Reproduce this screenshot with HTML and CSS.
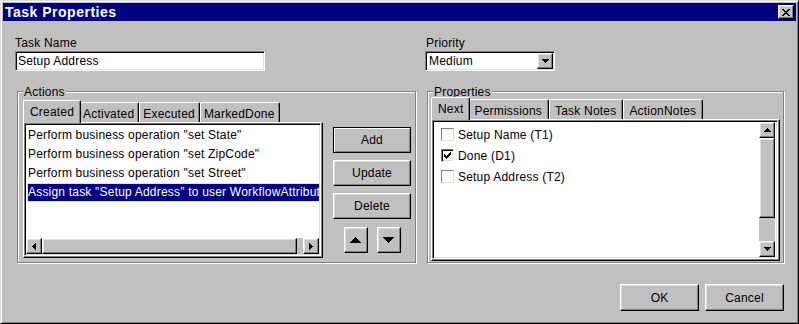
FILE: index.html
```html
<!DOCTYPE html>
<html>
<head>
    <title>Task Properties</title>
    <link rel="stylesheet" href="styles.css">
</head>
<body>
    <div class="window">
        <div class="titlebar">
            <span class="title">Task Properties</span>
            <button class="btn close-btn">
                <svg width="8" height="7" viewBox="0 0 8 7" shape-rendering="crispEdges"><path d="M0 0h2v1H0z M6 0h2v1H6z M1 1h2v1H1z M5 1h2v1H5z M2 2h4v1H2z M3 3h2v1H3z M2 4h4v1H2z M1 5h2v1H1z M5 5h2v1H5z M0 6h2v1H0z M6 6h2v1H6z"/></svg>
            </button>
        </div>

        <div class="dialog">
            <div class="fields">
                <div class="field name-field">
                    <label for="task-name">Task Name</label>
                    <input type="text" id="task-name" class="textbox" value="Setup Address">
                </div>
                <div class="field priority-field">
                    <label>Priority</label>
                    <div class="combo">
                        <span class="combo-value">Medium</span>
                        <span class="btn combo-btn">
                            <svg width="7" height="4" viewBox="0 0 7 4" shape-rendering="crispEdges"><path d="M0 0h7v1H0z M1 1h5v1H1z M2 2h3v1H2z M3 3h1v1H3z"/></svg>
                        </span>
                    </div>
                </div>
            </div>

            <div class="groups">
                <div class="group actions-group">
                    <span class="group-label">Actions</span>
                    <div class="tab-area">
                        <div class="tabs">
                            <div class="tab active">Created</div>
                            <div class="tab">Activated</div>
                            <div class="tab">Executed</div>
                            <div class="tab">MarkedDone</div>
                        </div>
                        <div class="tab-panel actions-panel">
                            <div class="listbox">
                                <div class="list-rows">
                                    <div class="rows-inner">
                                        <div class="row">Perform business operation "set State"</div>
                                        <div class="row">Perform business operation "set ZipCode"</div>
                                        <div class="row">Perform business operation "set Street"</div>
                                        <div class="row selected">Assign task "Setup Address" to user WorkflowAttribute(Assignee)</div>
                                    </div>
                                </div>
                                <div class="hscroll">
                                    <span class="btn sb-btn">
                                        <svg width="4" height="7" viewBox="0 0 4 7" shape-rendering="crispEdges"><path d="M3 0h1v7H3z M2 1h1v5H2z M1 2h1v3H1z M0 3h1v1H0z"/></svg>
                                    </span>
                                    <span class="btn sb-thumb hthumb"></span>
                                    <span class="sb-track"></span>
                                    <span class="btn sb-btn">
                                        <svg width="4" height="7" viewBox="0 0 4 7" shape-rendering="crispEdges"><path d="M0 0h1v7H0z M1 1h1v5H1z M2 2h1v3H2z M3 3h1v1H3z"/></svg>
                                    </span>
                                </div>
                            </div>
                        </div>
                    </div>
                    <div class="side-buttons">
                        <button class="btn side-btn default">Add</button>
                        <button class="btn side-btn">Update</button>
                        <button class="btn side-btn">Delete</button>
                        <div class="arrow-row">
                            <button class="btn arrow-btn">
                                <svg width="11" height="6" viewBox="0 0 11 6" shape-rendering="crispEdges"><path d="M5 0h1v1H5z M4 1h3v1H4z M3 2h5v1H3z M2 3h7v1H2z M1 4h9v1H1z M0 5h11v1H0z"/></svg>
                            </button>
                            <button class="btn arrow-btn">
                                <svg width="11" height="6" viewBox="0 0 11 6" shape-rendering="crispEdges"><path d="M0 0h11v1H0z M1 1h9v1H1z M2 2h7v1H2z M3 3h5v1H3z M4 4h3v1H4z M5 5h1v1H5z"/></svg>
                            </button>
                        </div>
                    </div>
                </div>

                <div class="group props-group">
                    <span class="group-label">Properties</span>
                    <div class="tabs">
                        <div class="tab active">Next</div>
                        <div class="tab">Permissions</div>
                        <div class="tab">Task Notes</div>
                        <div class="tab">ActionNotes</div>
                    </div>
                    <div class="tab-panel props-panel">
                        <div class="listbox props-list">
                            <div class="check-list">
                                <div class="check-row"><span class="checkbox"></span>Setup Name (T1)</div>
                                <div class="check-row">
                                    <span class="checkbox checked">
                                        <svg width="7" height="7" viewBox="0 0 7 7" shape-rendering="crispEdges"><path d="M6 0h1v1H6z M5 1h2v1H5z M0 2h1v1H0z M4 2h3v1H4z M0 3h2v1H0z M3 3h3v1H3z M0 4h5v1H0z M1 5h3v1H1z M2 6h1v1H2z"/></svg>
                                    </span>Done (D1)
                                </div>
                                <div class="check-row"><span class="checkbox"></span>Setup Address (T2)</div>
                            </div>
                            <div class="vscroll">
                                <span class="btn sb-btn">
                                    <svg width="7" height="4" viewBox="0 0 7 4" shape-rendering="crispEdges"><path d="M3 0h1v1H3z M2 1h3v1H2z M1 2h5v1H1z M0 3h7v1H0z"/></svg>
                                </span>
                                <span class="btn sb-thumb vthumb"></span>
                                <span class="sb-track"></span>
                                <span class="btn sb-btn">
                                    <svg width="7" height="4" viewBox="0 0 7 4" shape-rendering="crispEdges"><path d="M0 0h7v1H0z M1 1h5v1H1z M2 2h3v1H2z M3 3h1v1H3z"/></svg>
                                </span>
                            </div>
                        </div>
                    </div>
                </div>
            </div>

            <div class="footer">
                <button class="btn footer-btn">OK</button>
                <button class="btn footer-btn">Cancel</button>
            </div>
        </div>
    </div>
</body>
</html>
```

FILE: styles.css
```css
body {
    margin: 0;
    font-family: "Liberation Sans", Arial, sans-serif;
    font-size: 12px;
    letter-spacing: 0.2px;
    color: #000;
    background: #c0c0c0;
}

.window {
    width: 799px;
    height: 324px;
    box-sizing: border-box;
    padding: 2px;
    background: #c0c0c0;
    border: 1px solid;
    border-color: #dfdfdf #000 #000 #dfdfdf;
    box-shadow: inset 1px 1px #fff, inset -1px -1px #808080;
}

/* raised 3d look used by every button */
.btn {
    box-sizing: border-box;
    display: flex;
    align-items: center;
    justify-content: center;
    padding: 0;
    margin: 0;
    font-family: inherit;
    font-size: 12px;
    letter-spacing: inherit;
    color: #000;
    background: #c0c0c0;
    border: 1px solid;
    border-color: #fff #000 #000 #fff;
    box-shadow: inset -1px -1px #808080, inset 1px 1px #dfdfdf;
}

.titlebar {
    height: 18px;
    display: flex;
    align-items: center;
    justify-content: space-between;
    padding: 0 2px;
    background: #000080;
}

.title {
    color: #fff;
    font-weight: bold;
    font-size: 14px;
    letter-spacing: 0.5px;
    line-height: 18px;
}

.close-btn {
    width: 16px;
    height: 14px;
}

.dialog {
    padding: 15px 12px 0 12px;
}

.fields {
    display: flex;
}

.field label {
    display: block;
    line-height: 14px;
    margin-bottom: 1px;
}

.name-field {
    width: 250px;
}

.priority-field {
    width: 130px;
    margin-left: 160px;
}

.priority-field label {
    padding-left: 1px;
}

.textbox,
.combo {
    box-sizing: border-box;
    height: 20px;
    background: #fff;
    border: 1px solid;
    border-color: #808080 #fff #fff #808080;
    box-shadow: inset 1px 1px #000, inset -1px -1px #dfdfdf;
}

.textbox {
    width: 250px;
    padding: 0 2px;
    font-family: inherit;
    font-size: 12px;
    letter-spacing: inherit;
    color: #000;
    outline: none;
}

.combo {
    display: flex;
    padding: 1px;
}

.combo-value {
    flex: 1;
    line-height: 16px;
    padding-left: 2px;
}

.combo-btn {
    width: 16px;
    height: 16px;
}

.groups {
    display: flex;
    gap: 11px;
    margin: 20px 0 0 2px;
}

.group {
    position: relative;
    box-sizing: border-box;
    border: 1px solid #808080;
    box-shadow: inset 1px 1px #fff, 1px 1px #fff;
}

.group-label {
    position: absolute;
    top: -7px;
    left: 5px;
    padding: 0 1px;
    line-height: 14px;
    background: #c0c0c0;
}

.actions-group {
    width: 399px;
    display: flex;
    gap: 10px;
    padding: 8px 4px 4px 5px;
}

.props-group {
    flex: 1;
    padding: 5px 3px 1px 3px;
}

.tab-area {
    width: 300px;
}

.tabs {
    position: relative;
    z-index: 1;
    display: flex;
    align-items: flex-end;
    padding-left: 2px;
}

.tab {
    padding: 4px 4px 1px 3px;
    line-height: 14px;
    white-space: nowrap;
    background: #c0c0c0;
    border-top: 1px solid #fff;
    border-left: 1px solid #fff;
    border-right: 1px solid #000;
    border-radius: 2px 2px 0 0;
    box-shadow: inset -1px 0 #808080;
}

.props-group .tab {
    padding-left: 5px;
    padding-right: 6px;
}

.tab.active,
.props-group .tab.active {
    position: relative;
    z-index: 1;
    padding: 4px 6px 4px 6px;
    margin: 0 -2px -1px -2px;
}

.tab-panel {
    box-sizing: border-box;
    padding: 0 1px 1px 0;
    border: 1px solid;
    border-color: #fff #000 #000 #fff;
    box-shadow: inset -1px -1px #808080;
}

.actions-panel {
    height: 136px;
}

.props-panel {
    height: 142px;
}

.listbox {
    box-sizing: border-box;
    height: 100%;
    display: flex;
    flex-direction: column;
    padding: 1px;
    background: #fff;
    border: 1px solid;
    border-color: #808080 #fff #fff #808080;
    box-shadow: inset 1px 1px #000, inset -1px -1px #dfdfdf;
}

.list-rows {
    flex: 1;
    overflow: hidden;
    padding: 1px 0 0 1px;
}

.rows-inner {
    width: max-content;
    min-width: 100%;
}

.row {
    height: 19px;
    line-height: 19px;
    padding: 0 1px;
    white-space: nowrap;
}

.row.selected {
    background: #000080;
    color: #fff;
    outline: 1px solid #ffff00;
    outline-offset: -1px;
}

.hscroll {
    display: flex;
    height: 16px;
}

.sb-btn {
    width: 16px;
    height: 16px;
    flex: none;
}

.sb-track {
    flex: 1;
    background: #c0c0c0;
}

.hthumb {
    width: 255px;
    flex: none;
}

.props-list {
    flex-direction: row;
    padding: 1px 2px 1px 1px;
}

.check-list {
    flex: 1;
    padding: 2px 0 0 7px;
}

.check-row {
    display: flex;
    align-items: center;
    gap: 4px;
    height: 21px;
}

.checkbox {
    box-sizing: border-box;
    width: 13px;
    height: 13px;
    display: flex;
    align-items: center;
    justify-content: center;
    background: #fff;
    border: 1px solid;
    border-color: #808080 #dfdfdf #dfdfdf #808080;
}

.checkbox.checked {
    border-color: #808080 #fff #fff #808080;
    box-shadow: inset 1px 1px #000, inset -1px -1px #dfdfdf;
}

.vscroll {
    display: flex;
    flex-direction: column;
    width: 16px;
}

.vthumb {
    height: 80px;
    flex: none;
}

.side-buttons {
    width: 78px;
    display: flex;
    flex-direction: column;
    gap: 7px;
    margin-top: 27px;
}

.side-btn {
    width: 78px;
    height: 26px;
}

.side-btn.default {
    border: 1px solid #000;
    box-shadow: inset 1px 1px #fff, inset -1px -1px #808080;
}

.arrow-row {
    display: flex;
    justify-content: center;
    gap: 9px;
    margin-top: 1px;
}

.arrow-btn {
    width: 24px;
    height: 26px;
}

.footer {
    display: flex;
    justify-content: flex-end;
    gap: 6px;
    margin-top: 21px;
}

.footer-btn {
    width: 79px;
    height: 27px;
}
```
